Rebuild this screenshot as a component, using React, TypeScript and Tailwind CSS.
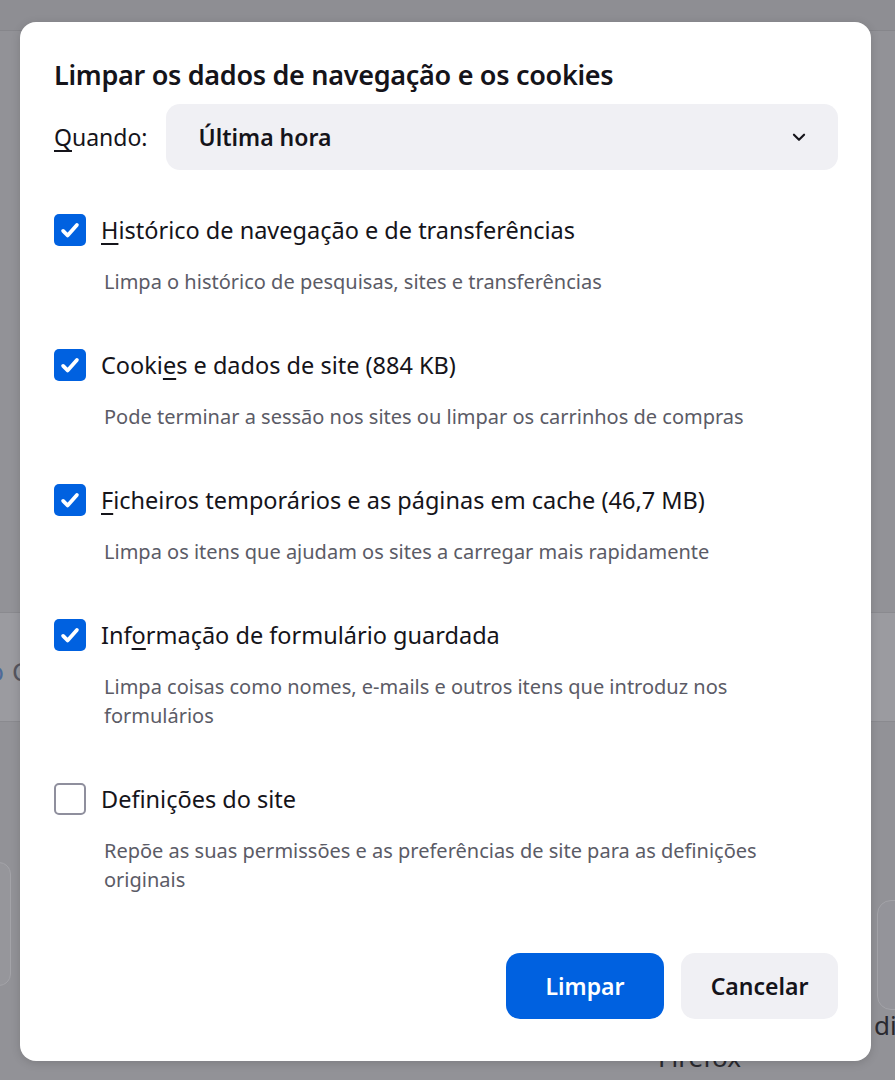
const font = { fontFamily: '"Noto Sans", "Open Sans", sans-serif' };

function Check({ checked }: { checked: boolean }) {
  if (!checked) {
    return <span className="h-[32px] w-[32px] shrink-0 rounded-[5px] border-2 border-[#8f8f9d] bg-white" />;
  }
  return (
    <span className="flex h-[32px] w-[32px] shrink-0 items-center justify-center rounded-[5px] bg-[#0061e0]">
      <svg viewBox="0 0 16 16" className="h-[24px] w-[24px]" fill="none" stroke="white" strokeWidth="2.5" strokeLinecap="round" strokeLinejoin="round">
        <path d="M3.4 8.6l3 3L12.6 4.6" />
      </svg>
    </span>
  );
}

type Item = { label: React.ReactNode; desc: string; checked: boolean };

const items: Item[] = [
  {
    label: (
      <>
        <u className="underline-offset-4">H</u>istórico de navegação e de transferências
      </>
    ),
    desc: "Limpa o histórico de pesquisas, sites e transferências",
    checked: true,
  },
  {
    label: (
      <>
        Cooki<u className="underline-offset-4">e</u>s e dados de site (884 KB)
      </>
    ),
    desc: "Pode terminar a sessão nos sites ou limpar os carrinhos de compras",
    checked: true,
  },
  {
    label: (
      <>
        <u className="underline-offset-4">F</u>icheiros temporários e as páginas em cache (46,7 MB)
      </>
    ),
    desc: "Limpa os itens que ajudam os sites a carregar mais rapidamente",
    checked: true,
  },
  {
    label: (
      <>
        Inf<u className="underline-offset-4">o</u>rmação de formulário guardada
      </>
    ),
    desc: "Limpa coisas como nomes, e-mails e outros itens que introduz nos formulários",
    checked: true,
  },
  {
    label: (
      <>
        Def<u className="underline-offset-4">i</u>nições do site
      </>
    ),
    desc: "Repõe as suas permissões e as preferências de site para as definições originais",
    checked: false,
  },
];

export default function App() {
  return (
    <div className="relative h-[1080px] w-[895px] overflow-hidden bg-[#929297]" style={font}>
      {/* dimmed page behind the dialog */}
      <div className="absolute left-0 top-0 h-[31px] w-full border-b border-[#86868b] bg-[#8e8e93]" />
      <div className="absolute left-0 top-[612px] h-[110px] w-full border-y border-[#8a8a8f] bg-[#9b9ba0]" />
      <span className="absolute left-[-60px] top-[652px] w-[64px] text-right text-[26px] text-[#4d6a99]">ção</span>
      <span className="absolute left-[12px] top-[652px] text-[26px] text-[#55555e]">C</span>
      <div className="absolute left-[-20px] top-[862px] h-[124px] w-[31px] rounded-[12px] border border-[#a3a3a8] bg-[#96969b]" />
      <div className="absolute left-[877px] top-[900px] h-[110px] w-[40px] rounded-[14px] border border-[#a3a3a8] bg-[#94949a]" />
      <span className="absolute left-[874px] top-[1006px] text-[26px] text-[#2a2a30]">di</span>
      <span className="absolute left-[658px] top-[1038px] text-[26px] text-[#2a2a30]">Firefox</span>

      <div className="relative ml-[20px] mt-[22px] w-[851px] rounded-[16px] bg-white pb-[42px] pl-[34px] pr-[33px] pt-[35px] shadow-[0_2px_10px_rgba(0,0,0,0.15)]">
        <h1 className="text-[27px] font-semibold leading-[36px] tracking-[-0.3px] text-[#15141a]">
          Limpar os dados de navegação e os cookies
        </h1>

        <div className="mt-[11px] flex items-center gap-[18px]">
          <span className="text-[23px] text-[#15141a]">
            <u className="underline-offset-4">Q</u>uando:
          </span>
          <div className="flex h-[66px] flex-1 items-center justify-between rounded-[14px] bg-[#f0f0f4] pl-[33px] pr-[30px]">
            <span className="text-[23px] font-semibold text-[#15141a]">Última hora</span>
            <svg viewBox="0 0 16 16" className="h-[18px] w-[18px]" fill="none" stroke="#15141a" strokeWidth="1.9" strokeLinecap="round" strokeLinejoin="round">
              <path d="M3.5 6l4.5 4.5L12.5 6" />
            </svg>
          </div>
        </div>

        <div className="mt-[44px] flex flex-col gap-[53px]">
          {items.map((it, i) => (
            <div key={i}>
              <div className="flex items-center gap-[15px]">
                <Check checked={it.checked} />
                <span className="text-[23.5px] leading-[32px] text-[#15141a]">{it.label}</span>
              </div>
              <p className="mt-[21px] pl-[50px] pr-[40px] text-[20px] leading-[29px] text-[#5b5b66]">{it.desc}</p>
            </div>
          ))}
        </div>

        <div className="mt-[59px] flex justify-end gap-[17px]">
          <button className="h-[66px] w-[158px] rounded-[14px] bg-[#0061e0] text-[23px] font-semibold text-white">
            Limpar
          </button>
          <button className="h-[66px] w-[157px] rounded-[14px] bg-[#f0f0f4] text-[23px] font-semibold text-[#15141a]">
            Cancelar
          </button>
        </div>
      </div>
    </div>
  );
}
